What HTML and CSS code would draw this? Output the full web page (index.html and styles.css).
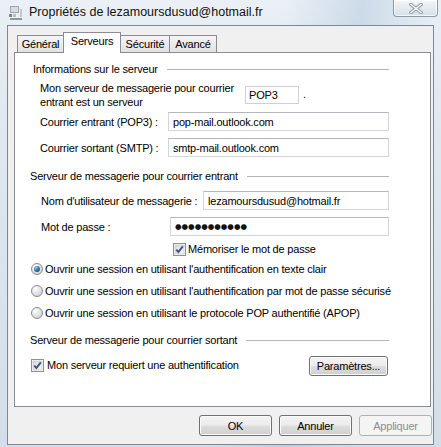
FILE: index.html
```html
<!DOCTYPE html>
<html lang="fr">
<head>
<meta charset="utf-8">
<title>Propriétés</title>
<link rel="stylesheet" href="styles.css">
</head>
<body>
<div class="window">
  <div class="titlebar">
    <svg class="app-icon" width="14" height="15" viewBox="0 0 14 15">
      <rect x="1" y="1" width="9" height="7" fill="#9ea4aa"/>
      <rect x="2" y="2" width="7" height="5" fill="#d9dde1"/>
      <rect x="0" y="9" width="3" height="3" fill="#7d848b"/>
      <rect x="4" y="9" width="3" height="3" fill="#b9bec3"/>
      <rect x="1" y="13" width="12" height="2" fill="#8f969c"/>
      <rect x="11" y="4" width="2" height="8" fill="#c4c9ce"/>
    </svg>
    <span class="title">Propriétés de lezamoursdusud@hotmail.fr</span>
    <div class="close">
      <svg width="14" height="11" viewBox="0 0 14 11">
        <path d="M2 1.5 L12 9.5 M12 1.5 L2 9.5" stroke="#8e99a4" stroke-width="3.4" stroke-linecap="square" fill="none"/>
        <path d="M2 1.5 L12 9.5 M12 1.5 L2 9.5" stroke="#ffffff" stroke-width="1.4" stroke-linecap="square" fill="none"/>
      </svg>
    </div>
  </div>

  <div class="client">
    <div class="tabs">
      <div class="tab t-gen">Général</div>
      <div class="tab t-srv active">Serveurs</div>
      <div class="tab t-sec">Sécurité</div>
      <div class="tab t-adv">Avancé</div>
    </div>

    <div class="panel">
      <div class="group-head first"><span>Informations sur le serveur</span><span class="line"></span></div>

      <div class="row-mon">
        <div class="mon-label">Mon serveur de messagerie pour courrier<br>entrant est un serveur</div>
        <div class="pop3">POP3</div>
        <span class="dot">.</span>
      </div>

      <div class="field-row r-in">
        <span class="lbl w-in">Courrier entrant (POP3) :</span>
        <div class="textbox">pop-mail.outlook.com</div>
      </div>
      <div class="field-row r-out">
        <span class="lbl w-in">Courrier sortant (SMTP) :</span>
        <div class="textbox">smtp-mail.outlook.com</div>
      </div>

      <div class="group-head g2"><span>Serveur de messagerie pour courrier entrant</span><span class="line"></span></div>

      <div class="field-row r-user">
        <span class="lbl w-user">Nom d'utilisateur de messagerie :</span>
        <div class="textbox">lezamoursdusud@hotmail.fr</div>
      </div>
      <div class="field-row r-pass">
        <span class="lbl w-pass">Mot de passe :</span>
        <div class="textbox"><span class="dots">●●●●●●●●●●●</span></div>
      </div>

      <div class="check-row r-mem">
        <svg class="cb" width="13" height="13" viewBox="0 0 13 13">
          <defs><linearGradient id="cbg1" x1="0" y1="0" x2="1" y2="1"><stop offset="0" stop-color="#d4d7db"/><stop offset="1" stop-color="#fbfbfb"/></linearGradient></defs>
          <rect x="0.5" y="0.5" width="12" height="12" fill="#fff" stroke="#8f8f8f"/>
          <rect x="2" y="2" width="9" height="9" fill="url(#cbg1)" stroke="#b9bcc0" stroke-width="0.6"/>
          <path d="M3.3 6.6 L5.4 9 L9.8 3.4" stroke="#3f527a" stroke-width="1.9" fill="none"/>
        </svg>
        <span>Mémoriser le mot de passe</span>
      </div>

      <div class="radio-row r-rad1">
        <svg class="rb" width="12" height="12" viewBox="0 0 12 12">
          <defs>
            <radialGradient id="rg" cx="0.35" cy="0.3" r="0.8"><stop offset="0" stop-color="#ffffff"/><stop offset="1" stop-color="#c9cbcd"/></radialGradient>
            <radialGradient id="rd" cx="0.35" cy="0.3" r="0.8"><stop offset="0" stop-color="#8fd0f0"/><stop offset="0.6" stop-color="#2a6f9e"/><stop offset="1" stop-color="#1b4466"/></radialGradient>
          </defs>
          <circle cx="6" cy="6" r="5.5" fill="url(#rg)" stroke="#8a8c8e"/>
          <circle cx="6" cy="6" r="2.9" fill="url(#rd)"/>
        </svg>
        <span>Ouvrir une session en utilisant l'authentification en texte clair</span>
      </div>
      <div class="radio-row r-rad2">
        <svg class="rb" width="12" height="12" viewBox="0 0 12 12">
          <circle cx="6" cy="6" r="5.5" fill="url(#rg)" stroke="#8a8c8e"/>
        </svg>
        <span>Ouvrir une session en utilisant l'authentification par mot de passe sécurisé</span>
      </div>
      <div class="radio-row r-rad3">
        <svg class="rb" width="12" height="12" viewBox="0 0 12 12">
          <circle cx="6" cy="6" r="5.5" fill="url(#rg)" stroke="#8a8c8e"/>
        </svg>
        <span>Ouvrir une session en utilisant le protocole POP authentifié (APOP)</span>
      </div>

      <div class="group-head g3"><span>Serveur de messagerie pour courrier sortant</span><span class="line"></span></div>

      <div class="auth-row">
        <svg class="cb" width="13" height="13" viewBox="0 0 13 13">
          <rect x="0.5" y="0.5" width="12" height="12" fill="#fff" stroke="#8f8f8f"/>
          <rect x="2" y="2" width="9" height="9" fill="url(#cbg1)" stroke="#b9bcc0" stroke-width="0.6"/>
          <path d="M3.3 6.6 L5.4 9 L9.8 3.4" stroke="#3f527a" stroke-width="1.9" fill="none"/>
        </svg>
        <span class="auth-text">Mon serveur requiert une authentification</span>
        <button class="btn btn-param">Paramètres...</button>
      </div>
    </div>

    <div class="buttons">
      <button class="btn">OK</button>
      <button class="btn">Annuler</button>
      <button class="btn disabled">Appliquer</button>
    </div>
  </div>
</div>
</body>
</html>
```

FILE: styles.css
```css
* { box-sizing: border-box; }

html, body {
  margin: 0;
  padding: 0;
}

body {
  width: 441px;
  height: 447px;
  overflow: hidden;
  font-family: "Liberation Sans", Arial, sans-serif;
  font-size: 11px;
  letter-spacing: -0.2px;
  color: #000;
  background:
    linear-gradient(100deg, rgba(255,255,255,0) 55%, rgba(150,180,210,0.35) 70%, rgba(255,255,255,0) 85%),
    linear-gradient(180deg, #eaf0f5 0%, #dfe8ef 30%, #d3dee8 100%);
}

.window {
  width: 441px;
  height: 447px;
  display: flex;
  flex-direction: column;
}

/* ---------- title bar ---------- */
.titlebar {
  height: 25px;
  flex: none;
  display: flex;
  align-items: center;
  padding-left: 9px;
}

.app-icon {
  margin-right: 6px;
  margin-top: -1px;
}

.title {
  font-size: 12.5px;
  letter-spacing: 0;
  margin-top: -2px;
  color: #111;
}

.close {
  margin-left: auto;
  margin-right: 3px;
  align-self: flex-start;
  width: 45px;
  height: 17px;
  border: 1px solid #8d99a6;
  border-top: none;
  border-radius: 0 0 4px 4px;
  background: linear-gradient(180deg, #f4f7fa 0%, #e3eaf0 50%, #d7e0e8 100%);
  box-shadow: inset 0 0 0 1px rgba(255,255,255,0.7);
  display: flex;
  align-items: center;
  justify-content: center;
}

/* ---------- client ---------- */
.client {
  flex: none;
  height: 420px;
  margin: 0 7px 2px 7px;
  border: 1px solid #7b8896;
  background: #f0f0f0;
  padding: 6px 0 0 6px;
  display: flex;
  flex-direction: column;
}

.tabs {
  height: 20px;
  flex: none;
  display: flex;
  align-items: flex-end;
  padding-left: 3px;
  position: relative;
  z-index: 1;
}

.tab {
  height: 17px;
  border: 1px solid #898c95;
  border-bottom: none;
  margin-right: -1px;
  background: linear-gradient(180deg, #f5f5f5 0%, #ebebeb 50%, #e2e2e2 100%);
  display: flex;
  align-items: center;
  justify-content: center;
  padding-bottom: 1px;
}

.t-gen { width: 47px; }
.t-srv { width: 58px; }
.t-sec { width: 50px; }
.t-adv { width: 48px; }

.tab.active {
  height: 21px;
  margin-bottom: -1px;
  background: #fff;
  padding-bottom: 5px;
  position: relative;
  z-index: 2;
}

.panel {
  height: 355px;
  flex: none;
  margin-right: 2px;
  background: #fff;
  border: 1px solid #898c95;
  padding: 0 41px 0 15px;
  display: flex;
  flex-direction: column;
}

.group-head {
  height: 16px;
  display: flex;
  align-items: center;
  white-space: nowrap;
}

.group-head .line {
  flex: 1;
  height: 1px;
  background: #b2b6ba;
  margin-left: 9px;
}

.group-head.first { margin-top: 8px; padding-left: 3px; }
.group-head.g2 { margin-top: 11px; }
.group-head.g3 { margin-top: 12px; }

.row-mon {
  margin-top: 4px;
  height: 28px;
  padding-left: 10px;
  display: flex;
  align-items: flex-start;
}

.mon-label {
  width: 205px;
  line-height: 14px;
  white-space: nowrap;
}

.pop3 {
  margin-top: 5px;
  width: 54px;
  height: 18px;
  border: 1px solid #cdd0d4;
  padding-left: 3px;
  display: flex;
  align-items: center;
}

.dot {
  margin-left: 4px;
  margin-top: 7px;
  line-height: 12px;
}

.field-row {
  height: 19px;
  display: flex;
  align-items: center;
  padding-left: 10px;
  white-space: nowrap;
}

.r-in { margin-top: 3px; }
.r-out { margin-top: 7px; }
.r-user { margin-top: 7px; padding-left: 11px; }
.r-pass { margin-top: 7px; padding-left: 11px; }

.w-in { width: 128px; }
.w-user { width: 162px; }
.w-pass { width: 129px; }

.textbox {
  flex: 1;
  height: 19px;
  border: 1px solid #d2d6db;
  border-top-color: #b4b8bd;
  padding-left: 4px;
  display: flex;
  align-items: center;
  background: #fff;
}

.dots {
  font-size: 7.5px;
  letter-spacing: 0;
  font-family: "DejaVu Sans", sans-serif;
  color: #111;
}

.check-row {
  height: 14px;
  display: flex;
  align-items: center;
  white-space: nowrap;
}

.r-mem { margin-top: 6px; padding-left: 143px; }
.r-mem .cb { margin-right: 2px; }

.radio-row {
  height: 14px;
  display: flex;
  align-items: center;
  padding-left: 1px;
  white-space: nowrap;
}

.radio-row .rb { margin-right: 2px; flex: none; }

.r-rad1 { margin-top: 6px; }
.r-rad2 { margin-top: 8px; }
.r-rad3 { margin-top: 8px; }

.auth-row {
  margin-top: 8px;
  height: 20px;
  display: flex;
  align-items: center;
  padding-left: 1px;
  white-space: nowrap;
}

.auth-row .cb { margin-right: 3px; margin-top: -2px; }
.auth-text { margin-top: -2px; }

/* ---------- buttons ---------- */
.btn {
  font-family: "Liberation Sans", Arial, sans-serif;
  font-size: 11px;
  letter-spacing: -0.2px;
  color: #000;
  border: 1px solid #707070;
  border-radius: 3px;
  background: linear-gradient(180deg, #f4f4f4 0%, #ececec 48%, #dddddd 52%, #cfcfcf 100%);
  box-shadow: inset 0 0 0 1px #fbfbfb;
  padding: 0;
  margin: 0;
  height: 21px;
  width: 73px;
  display: flex;
  align-items: center;
  justify-content: center;
}

.btn-param {
  margin-left: auto;
  margin-right: 1px;
  width: 79px;
  height: 20px;
  margin-top: 0;
}

.btn.disabled {
  color: #8d8d8d;
  border-color: #adb2b5;
  background: #f4f4f4;
  box-shadow: none;
}

.buttons {
  margin-top: 8px;
  display: flex;
  justify-content: flex-end;
  gap: 7px;
  padding-right: 1px;
}
```
